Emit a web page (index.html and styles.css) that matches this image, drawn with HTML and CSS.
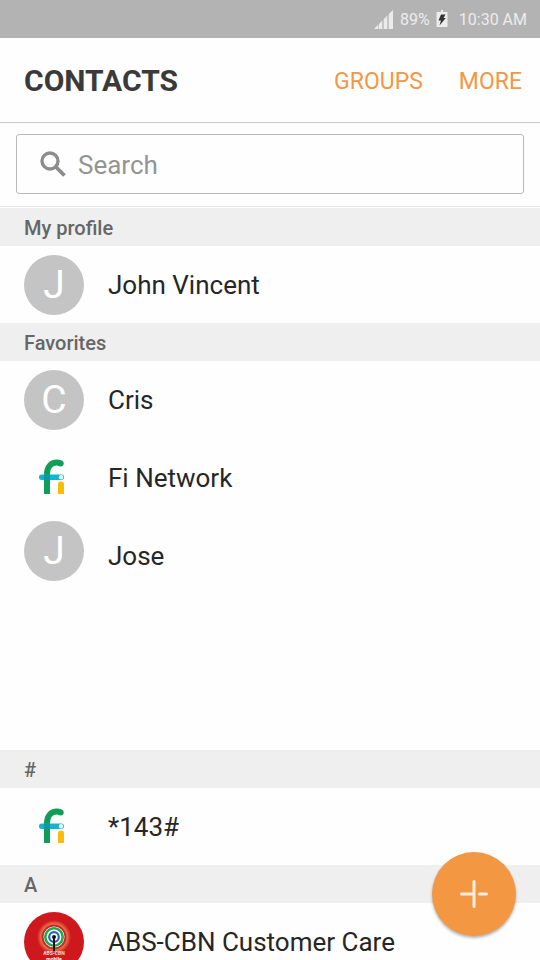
FILE: index.html
```html
<!DOCTYPE html>
<html lang="en">
<head>
<meta charset="utf-8">
<meta name="viewport" content="width=device-width, initial-scale=1">
<title>Contacts</title>
<link rel="stylesheet" href="styles.css">
</head>
<body>
<svg class="symbols" aria-hidden="true">
  <symbol id="fi-logo" viewBox="0 0 60 60">
    <path d="M23 46V26C23 19 27 14.500 33 14.500C34.500 14.500 35.500 15 36.500 15.500" fill="none" stroke="#0f9d58" stroke-width="6"/>
    <circle cx="36.700" cy="15.500" r="3" fill="#0f9d58"/>
    <path d="M34 46V36.500Q34 33.500 37 33.500T40 36.500V46z" fill="#fbbc05"/>
    <rect x="15" y="26.500" width="25" height="5.500" rx="2.700" fill="#12b5cb"/>
    <path d="M20 26.500h6v5.500h-6z" fill="#0b98a6"/>
    <circle cx="37" cy="29.300" r="2.200" fill="#e8fbfd"/>
  </symbol>
</svg>

<div class="status">
  <svg class="signal" viewBox="0 0 20 20" role="img" aria-label="Signal strength">
    <path d="M0 20L4 16V20zM5 15L8 12V20H5zM10 10L13 7V20H10zM15 5L19 1V20H15z" fill="#ececec"/>
    <path d="M0 20L19 1V20z" fill="#ececec" fill-opacity="0.350"/>
  </svg>
  <span class="percent">89%</span>
  <svg class="battery" viewBox="0 0 12 18" role="img" aria-label="Battery charging">
    <path d="M5 0h2v2h4.500v15H0.500V2H5z" fill="#ececec"/>
    <path d="M5 4.500h4.500L7.500 8H9.800L3.500 15.500 5 10.500H2.500z" fill="#333"/>
  </svg>
  <span>10:30 AM</span>
</div>

<header class="header">
  <h1>CONTACTS</h1>
  <nav class="actions">
    <button type="button">GROUPS</button>
    <button type="button">MORE</button>
  </nav>
</header>

<form class="search" role="search">
  <label class="search-box">
    <svg class="search-icon" viewBox="0 0 26 26" aria-hidden="true">
      <circle cx="10" cy="10" r="8" fill="none" stroke="#8c8c8c" stroke-width="3.400"/>
      <path d="M15.500 15.500L24.500 24.500" stroke="#8c8c8c" stroke-width="3.800"/>
    </svg>
    <input type="search" placeholder="Search" aria-label="Search">
  </label>
</form>

<main class="contacts">
  <section>
    <h2>My profile</h2>
    <ul>
      <li><span class="avatar">J</span><span>John Vincent</span></li>
    </ul>
  </section>
  <section class="favorites">
    <h2>Favorites</h2>
    <ul>
      <li><span class="avatar">C</span><span>Cris</span></li>
      <li><svg class="photo" aria-hidden="true"><use href="#fi-logo"/></svg><span>Fi Network</span></li>
      <li><span class="avatar raised">J</span><span>Jose</span></li>
    </ul>
  </section>
  <section>
    <h2>#</h2>
    <ul>
      <li><svg class="photo" aria-hidden="true"><use href="#fi-logo"/></svg><span>*143#</span></li>
    </ul>
  </section>
  <section>
    <h2>A</h2>
    <ul>
      <li>
        <svg class="photo" viewBox="0 0 60 60" aria-hidden="true">
          <defs>
            <radialGradient id="glow">
              <stop offset="0.600" stop-color="#f6b48c"/>
              <stop offset="0.800" stop-color="#e0633f"/>
              <stop offset="1" stop-color="#cf181d"/>
            </radialGradient>
          </defs>
          <circle cx="30" cy="30" r="30" fill="#cf181d"/>
          <circle cx="30" cy="25" r="17" fill="url(#glow)"/>
          <circle cx="30" cy="25" r="11.500" fill="#fff" stroke="#c8262b" stroke-width="2"/>
          <circle cx="30" cy="25" r="8.700" fill="none" stroke="#20a84a" stroke-width="2.600"/>
          <circle cx="30" cy="25" r="4.800" fill="none" stroke="#1d69b4" stroke-width="2.200"/>
          <circle cx="30" cy="25" r="2" fill="#151515"/>
          <path d="M30 24V39" stroke="#151515" stroke-width="2"/>
          <text class="logo-name" x="30" y="43" text-anchor="middle">ABS-CBN</text>
          <text class="logo-sub" x="30" y="49" text-anchor="middle">mobile</text>
        </svg>
        <span>ABS-CBN Customer Care</span>
      </li>
    </ul>
  </section>
</main>

<button class="fab" type="button" aria-label="Add contact">
  <svg viewBox="0 0 28 28" aria-hidden="true">
    <path d="M14 1.500V26.500M1.500 14H13M19.500 14H26.500" fill="none" stroke="#fdeee0" stroke-width="3" stroke-linecap="round"/>
  </svg>
</button>
</body>
</html>
```
FILE: styles.css
```css
* {
  box-sizing: border-box;
}

body {
  margin: 0;
  height: 100vh;
  display: flex;
  flex-direction: column;
  background: #fefefe;
  color: #262626;
  font-family: Roboto, "Liberation Sans", sans-serif;
}

button {
  border: 0;
  padding: 0;
  background: none;
  font: inherit;
  cursor: pointer;
}

.symbols {
  position: absolute;
  width: 0;
  height: 0;
}

.status {
  flex: none;
  display: flex;
  align-items: center;
  justify-content: flex-end;
  height: 38px;
  padding-right: 13px;
  background: #b3b3b3;
  color: #ececec;
  font-size: 16px;
}

.signal {
  width: 20px;
  height: 20px;
  margin-right: 6px;
}

.battery {
  width: 12px;
  height: 18px;
  margin: 0 11px 0 6px;
}

.header {
  flex: none;
  display: flex;
  align-items: center;
  justify-content: space-between;
  height: 85px;
  padding: 0 18px 0 24px;
  border-bottom: 1px solid #cacaca;
}

h1 {
  margin: 0;
  color: #3a3a3a;
  font-size: 30px;
  font-weight: 700;
}

.actions {
  display: flex;
  gap: 36px;
  padding-top: 2px;
  color: #f49742;
  font-size: 23px;
}

.actions button {
  color: inherit;
}

.search {
  flex: none;
  padding: 11px 16px 12px;
  border-bottom: 1px solid #e4e4e4;
  margin-bottom: 1px;
}

.search-box {
  display: flex;
  align-items: center;
  gap: 12px;
  height: 60px;
  padding: 0 23px;
  border: 1px solid #b8b8b8;
  border-radius: 3px;
}

.search-icon {
  flex: none;
  width: 26px;
  height: 26px;
}

.search input {
  flex: 1;
  min-width: 0;
  padding: 2px 0 0;
  border: 0;
  outline: 0;
  background: none;
  color: #262626;
  font: inherit;
  font-size: 26px;
}

.search input::placeholder {
  color: #949494;
  opacity: 1;
}

.contacts {
  flex: 1;
  min-height: 0;
  overflow-y: auto;
  scrollbar-width: none;
}

h2 {
  margin: 0;
  padding: 2px 24px 0;
  background: #efefef;
  color: #666;
  font-size: 20px;
  font-weight: 500;
  line-height: 36px;
}

ul {
  display: grid;
  gap: 1px;
  margin: 0;
  padding: 0;
  list-style: none;
}

li {
  display: flex;
  align-items: center;
  gap: 24px;
  min-height: 77px;
  padding: 4px 24px;
  font-size: 26px;
}

.favorites {
  padding-bottom: 156px;
}

.avatar {
  flex: none;
  display: grid;
  place-items: center;
  width: 60px;
  height: 60px;
  border-radius: 50%;
  background: #c4c4c4;
  color: #fff;
  font-size: 39px;
}

.raised {
  align-self: flex-start;
}

.photo {
  flex: none;
  width: 60px;
  height: 60px;
}

.logo-name {
  fill: #f6d9cf;
  font-size: 5px;
  font-weight: 700;
}

.logo-sub {
  fill: #fff;
  font-size: 5px;
  font-weight: 700;
}

.fab {
  position: fixed;
  right: 24px;
  bottom: 24px;
  display: grid;
  place-items: center;
  width: 84px;
  height: 84px;
  border-radius: 50%;
  background: #f49742;
  box-shadow: 0 2px 3px rgba(0, 0, 0, 0.3);
}

.fab svg {
  width: 28px;
  height: 28px;
}
```
